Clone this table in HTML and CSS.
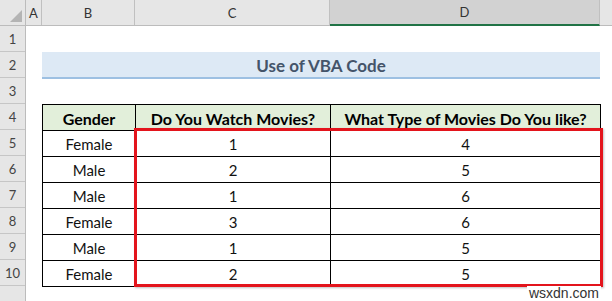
FILE: index.html
```html
<!DOCTYPE html>
<html>
<head>
<meta charset="utf-8">
<link rel="stylesheet" href="styles.css">
</head>
<body>
<div class="sheet">
  <div class="corner"><span class="tri"></span></div>
  <div class="colheads">
    <div class="ch w-a">A</div>
    <div class="ch w-b">B</div>
    <div class="ch w-c">C</div>
    <div class="ch w-d sel">D</div>
    <div class="ch rest"></div>
  </div>
  <div class="rowheads">
    <div class="rh">1</div>
    <div class="rh">2</div>
    <div class="rh r3">3</div>
    <div class="rh">4</div>
    <div class="rh">5</div>
    <div class="rh">6</div>
    <div class="rh">7</div>
    <div class="rh">8</div>
    <div class="rh">9</div>
    <div class="rh">10</div>
    <div class="rh last"></div>
  </div>
  <div class="content">
    <div class="spacer"></div>
    <div class="title">Use of VBA Code</div>
    <div class="spacer s3"></div>
    <div class="table">
      <div class="cell hd">Gender</div>
      <div class="cell hd">Do You Watch Movies?</div>
      <div class="cell hd">What Type of Movies Do You like?</div>
      <div class="cell">Female</div><div class="cell">1</div><div class="cell">4</div>
      <div class="cell">Male</div><div class="cell">2</div><div class="cell">5</div>
      <div class="cell">Male</div><div class="cell">1</div><div class="cell">6</div>
      <div class="cell">Female</div><div class="cell">3</div><div class="cell">6</div>
      <div class="cell">Male</div><div class="cell">1</div><div class="cell">5</div>
      <div class="cell">Female</div><div class="cell">2</div><div class="cell">5</div>
      <div class="redbox"></div>
    </div>
  </div>
  <div class="watermark">wsxdn.com</div>
</div>
</body>
</html>
```

FILE: styles.css
```css
* { box-sizing: border-box; }
html, body { margin: 0; padding: 0; background: #ffffff; }
body { width: 612px; height: 301px; overflow: hidden; font-family: "Lato", "Open Sans", sans-serif; }

.sheet {
  position: relative;
  display: grid;
  grid-template-columns: 26px 586px;
  grid-template-rows: 26px 275px;
}

.corner {
  position: relative;
  background: #e6e6e6;
  border-right: 1px solid #bcbcbc;
  border-bottom: 1px solid #bcbcbc;
}
.tri {
  position: absolute;
  right: 3px;
  bottom: 3px;
  width: 0;
  height: 0;
  border-left: 12px solid transparent;
  border-bottom: 12px solid #b4b4b4;
}

.colheads {
  display: flex;
  background: #e6e6e6;
  border-bottom: 1px solid #bcbcbc;
}
.ch {
  display: flex;
  align-items: center;
  justify-content: center;
  font-size: 13px;
  color: #333;
  border-right: 1px solid #c0c0c0;
  font-family: "Lato", sans-serif;
}
.w-a { width: 16px; }
.w-b { width: 93px; }
.w-c { width: 195px; }
.w-d { width: 270px; }
.rest { flex: 1; border-right: none; }
.sel {
  background: #d2d2d2;
  border-bottom: 2px solid #217346;
  margin-bottom: -1px;
  color: #333;
}

.rowheads {
  display: flex;
  flex-direction: column;
  background: #e6e6e6;
  border-right: 1px solid #bcbcbc;
}
.rh {
  height: 26px;
  flex: none;
  display: flex;
  align-items: center;
  justify-content: center;
  font-size: 13px;
  color: #444;
  border-bottom: 1px solid #c6c6c6;
  padding-top: 1px;
}
.rh.last { border-bottom: none; flex: 1; }

.content {
  padding-left: 16px;
  display: flex;
  flex-direction: column;
}
.spacer { height: 26px; flex: none; }
.spacer.s3 { height: 25px; }
.title {
  height: 27px;
  width: 558px;
  flex: none;
  background: #dde9f5;
  border-bottom: 2px solid #9dc0e2;
  display: flex;
  align-items: center;
  justify-content: center;
  font-weight: 700;
  font-size: 17px;
  color: #44546a;
  padding-top: 1px;
}

.table {
  position: relative;
  display: grid;
  grid-template-columns: 93px 195px 270px;
  grid-auto-rows: 26px;
  width: 559px;
  border-left: 1px solid #000;
  border-top: 1px solid #000;
}
.cell {
  border-right: 1px solid #000;
  border-bottom: 1px solid #000;
  display: flex;
  align-items: center;
  justify-content: center;
  font-size: 15px;
  color: #111;
  padding-top: 1px;
}
.cell.hd {
  background: #e2efda;
  font-weight: 700;
  font-size: 16px;
  color: #000;
}

.redbox {
  position: absolute;
  left: 91px;
  top: 23px;
  width: 469px;
  height: 159px;
  border: 3px solid #e3141c;
  box-shadow: 1px 1px 2px rgba(0,0,0,0.25);
  pointer-events: none;
}

.watermark {
  position: absolute;
  right: 11px;
  bottom: 1px;
  background: #ffffff;
  font-family: "Liberation Sans", Arial, sans-serif;
  font-size: 14px;
  color: #333;
  padding: 0 2px;
  line-height: 14px;
}
```
